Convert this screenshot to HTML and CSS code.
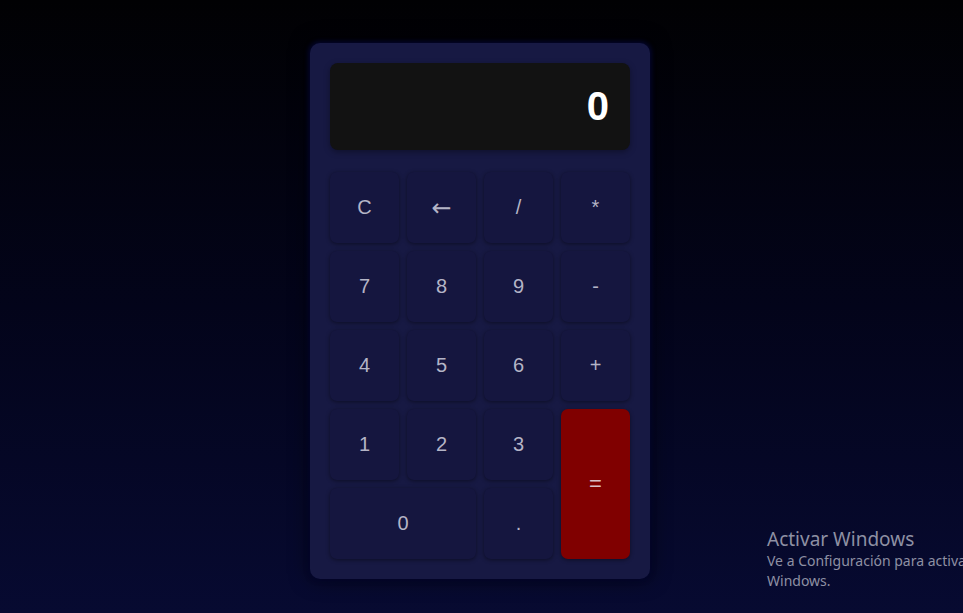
FILE: index.html
```html
<!DOCTYPE html>
<html lang="es">
<head>
<meta charset="utf-8">
<title>Calculadora</title>
<link rel="stylesheet" href="styles.css">
</head>
<body>
  <main class="calculator">
    <div class="display">0</div>
    <div class="keys">
      <button class="key">C</button>
      <button class="key key-arrow">&larr;</button>
      <button class="key">/</button>
      <button class="key">*</button>
      <button class="key">7</button>
      <button class="key">8</button>
      <button class="key">9</button>
      <button class="key">-</button>
      <button class="key">4</button>
      <button class="key">5</button>
      <button class="key">6</button>
      <button class="key">+</button>
      <button class="key">1</button>
      <button class="key">2</button>
      <button class="key">3</button>
      <button class="key key-equals">=</button>
      <button class="key key-zero">0</button>
      <button class="key">.</button>
    </div>
  </main>
  <div class="watermark">
    <div class="wm-title">Activar Windows</div>
    <div class="wm-text">Ve a Configuración para activar<br>Windows.</div>
  </div>
</body>
</html>
```

FILE: styles.css
```css
html, body {
  margin: 0;
  height: 100%;
}
body {
  background: linear-gradient(to bottom, #010103 0%, #03041a 50%, #070a31 100%);
  display: flex;
  flex-direction: column;
  align-items: center;
  padding-top: 43px;
  padding-right: 3px;
  box-sizing: border-box;
  font-family: "Liberation Sans", Arial, sans-serif;
  overflow: hidden;
  position: relative;
}
.calculator {
  width: 300px;
  padding: 20px;
  background: #171943;
  border-radius: 10px;
  box-shadow: 0 0 4px 2px #03052a, 0 0 20px rgba(0, 0, 0, 0.6);
}
.display {
  height: 87px;
  background: #121212;
  border-radius: 8px;
  color: #ffffff;
  font-weight: bold;
  font-size: 40px;
  display: flex;
  align-items: center;
  justify-content: flex-end;
  padding: 0 21px;
  box-sizing: border-box;
  box-shadow: 0 2px 6px rgba(0, 0, 0, 0.35);
  margin-bottom: 22px;
}
.keys {
  display: grid;
  grid-template-columns: repeat(4, 69px);
  grid-auto-rows: 71px;
  gap: 8px;
}
.key {
  border: none;
  border-radius: 7px;
  background: #15163f;
  color: #b4b4c6;
  font-family: "Liberation Sans", Arial, sans-serif;
  font-size: 20px;
  box-shadow: 0 1px 4px rgba(0, 0, 0, 0.45);
  padding: 0;
}
.key-arrow {
  font-family: "DejaVu Sans", sans-serif;
  font-size: 24px;
}
.key-equals {
  grid-column: 4;
  grid-row: 4 / span 2;
  background: #800000;
  color: #d8c0c8;
  font-size: 22px;
}
.key-zero {
  grid-column: 1 / span 2;
}
.watermark {
  position: absolute;
  left: 767px;
  top: 527px;
  color: #8e90a3;
  font-family: "Noto Sans", "Open Sans", sans-serif;
  white-space: nowrap;
}
.wm-title {
  font-size: 19px;
  line-height: 24px;
}
.wm-text {
  font-size: 14px;
  line-height: 20px;
}
```
